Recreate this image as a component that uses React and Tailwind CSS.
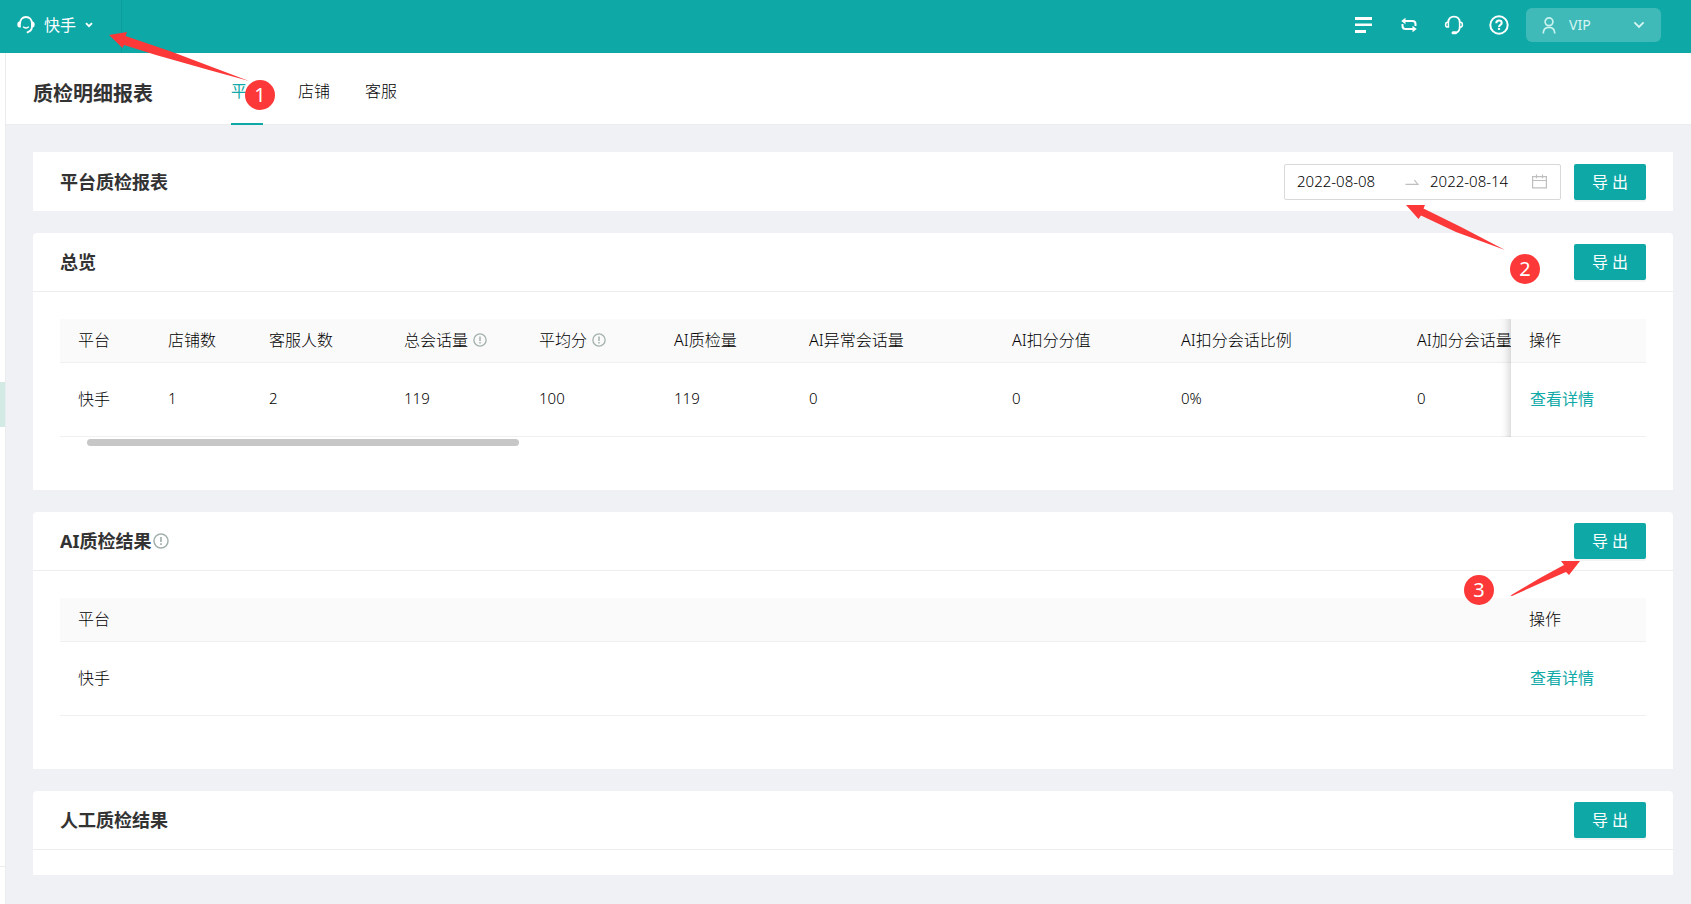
import React from "react";

const columns = [
  { label: "平台", width: "w-[90px]", value: "快手" },
  { label: "店铺数", width: "w-[101px]", value: "1" },
  { label: "客服人数", width: "w-[135px]", value: "2" },
  { label: "总会话量", width: "w-[135px]", value: "119", info: true },
  { label: "平均分", width: "w-[135px]", value: "100", info: true },
  { label: "AI质检量", width: "w-[135px]", value: "119" },
  { label: "AI异常会话量", width: "w-[203px]", value: "0" },
  { label: "AI扣分分值", width: "w-[169px]", value: "0" },
  { label: "AI扣分会话比例", width: "w-[236px]", value: "0%" },
  { label: "AI加分会话量", width: "w-[236px]", value: "0" },
];

function InfoIcon({ className }) {
  return (
    <svg viewBox="0 0 16 16" className={className} fill="none" stroke="#a3b1ad" strokeWidth="1.5">
      <circle cx="8" cy="8" r="7" />
      <path d="M8 4v5" strokeWidth="1.7" />
      <path d="M8 10.2v1.8" strokeWidth="1.7" />
    </svg>
  );
}

function ExportButton() {
  return (
    <button
      type="button"
      className="h-9 w-[72px] shrink-0 rounded-[2px] bg-[#0ea9a7] text-base leading-none text-white shadow-[0_2px_0_rgba(0,0,0,0.045)]"
    >
      导 出
    </button>
  );
}

function CardHeader({ title, info }) {
  return (
    <div className="flex h-[59px] items-center justify-between border-b border-[#ededed] px-[27px]">
      <h2 className="flex items-center gap-[2px] text-lg font-bold text-[#333]">
        {title}
        {info && <InfoIcon className="size-4" />}
      </h2>
      <ExportButton />
    </div>
  );
}

const headCell =
  "h-11 border-b border-[#f0f0f0] bg-[#fafafa] px-[18px] pb-[2px] text-left font-light whitespace-nowrap text-black";
const bodyCell = "h-[74px] border-b border-[#f0f0f0] bg-white px-[18px] pb-[2px] font-light text-black";
const pinned =
  "sticky right-0 before:pointer-events-none before:absolute before:top-0 before:-bottom-px before:right-full before:w-[30px] before:shadow-[inset_-10px_0_8px_-8px_rgba(0,0,0,0.18)]";

function DetailLink() {
  return (
    <a href="#detail" className="pl-px font-normal text-[#12aaa8]">
      查看详情
    </a>
  );
}

function Marker({ n, className }) {
  return (
    <span
      className={
        "absolute flex size-[30px] items-center justify-center rounded-full bg-[#fc3838] text-xl leading-none text-white " +
        className
      }
    >
      {n}
    </span>
  );
}

export default function App() {
  return (
    <div className="relative flex min-h-screen flex-col overflow-hidden bg-[#f0f1f5] font-['Noto_Sans','Noto_Sans_CJK_SC',sans-serif] text-base text-[#333]">
      <header className="flex h-[53px] items-center justify-between bg-[#0ea9a7] pr-[30px] text-white">
        <button
          type="button"
          className="flex h-full w-[122px] items-center border-r border-[#0c9c9b] pb-1 pl-[17px] text-base"
        >
          <svg viewBox="0 0 18 18" className="mr-[9px] size-[18px]" fill="none" stroke="white" strokeWidth="1.8">
            <path d="M3 8C3 3.800 5.400 1 9 1s6 2.800 6 7v2.600c0 3-1.800 5.100-5.200 6" />
            <path d="M3.800 5.600H2.600C1.200 5.600.3 6.800.3 8.600s.9 3 2.300 3h1.200zM14.200 5.600h1.200c1.400 0 2.300 1.200 2.300 3s-.9 3-2.300 3h-1.200z" fill="white" stroke="none" />
            <path d="M6.200 10.600c.7 1 1.700 1.400 2.800 1.400s2.100-.4 2.800-1.400" strokeWidth="1.500" />
          </svg>
          快手
          <svg viewBox="0 0 8 6" className="ml-[9px] h-[6px] w-[8px]" fill="none" stroke="white" strokeWidth="1.900">
            <path d="M1 1.200 4 4.200 7 1.200" />
          </svg>
        </button>
        <div className="flex items-center pb-[3px]">
          <button type="button" aria-label="菜单" className="mr-[28px]">
            <svg viewBox="0 0 18 18" className="block size-[18px]" fill="white">
              <path d="M0 1h17v3H0zM0 7.500h17v2.500H0zM0 14h11v3H0z" />
            </svg>
          </button>
          <button type="button" aria-label="切换" className="mr-[27px]">
            <svg viewBox="0 0 16 16" className="block size-4" fill="none" stroke="white" strokeWidth="2">
              <path d="M3 4h8.500c2 0 3 1 3 3v2" />
              <path d="M13 12H4.500c-2 0-3-1-3-3V7" />
              <path d="M4.500.8v6.400L.3 4zM11.500 8.800v6.400l4.200-3.200z" fill="white" stroke="none" />
            </svg>
          </button>
          <button type="button" aria-label="客服" className="mr-[25px]">
            <svg viewBox="0 0 20 20" className="block size-5" fill="none" stroke="white" strokeWidth="1.800">
              <path d="M4.200 7.500C4.400 3.800 6.600 1.600 10 1.600s5.600 2.200 5.800 5.900" />
              <path d="M4.400 7.300H3.600c-1.300 0-2 .9-2 2.400s.7 2.400 2 2.400h.8zM15.600 7.300h.8c1.300 0 2 .9 2 2.400s-.7 2.400-2 2.400h-.8z" strokeWidth="1.500" />
              <path d="M15.800 12c-.1 2.800-1.300 4.800-3.400 5.600" />
              <path d="M9 17.800h2.600" strokeWidth="3" strokeLinecap="round" />
            </svg>
          </button>
          <button type="button" aria-label="帮助" className="mr-[17px]">
            <svg viewBox="0 0 20 20" className="block size-5" fill="none" stroke="white" strokeWidth="2">
              <circle cx="10" cy="10" r="8.700" />
              <path d="M7.300 8.200c0-1.700 1.100-2.700 2.700-2.700s2.700 1 2.700 2.400c0 1.900-2.700 2-2.700 4" strokeWidth="2" />
              <path d="M10 12.900v2" strokeWidth="2.200" />
            </svg>
          </button>
          <button
            type="button"
            className="flex h-[34px] w-[135px] items-center rounded-md bg-[#3fbab9] px-[16px] text-sm text-[#d8f6f4]"
          >
            <svg viewBox="0 0 14 17" className="h-[17px] w-[14px]" fill="none" stroke="#c8f3ef" strokeWidth="1.700">
              <circle cx="7" cy="4.800" r="3.900" />
              <path d="M1.200 16.500c.1-4 2.300-6.200 5.800-6.200s5.700 2.200 5.800 6.200" />
            </svg>
            <span className="ml-[13px] flex-1 text-left">VIP</span>
            <svg viewBox="0 0 12 8" className="h-2 w-3" fill="none" stroke="#d8f6f4" strokeWidth="1.800">
              <path d="m1.400 1.400 4.600 4.600 4.600-4.600" />
            </svg>
          </button>
        </div>
      </header>

      <div className="flex flex-1">
        <aside className="w-[6px] shrink-0 border-r border-[#ebecee] bg-white">
          <div className="mt-[329px] h-[45px] bg-[#d2eae3]" />
          <div className="mt-[439px] h-px bg-[#ececec]" />
        </aside>

        <div className="min-w-0 flex-1">
          <div className="flex h-[72px] items-center border-b border-[#ececee] bg-white pl-[27px]">
            <h1 className="pt-[11px] text-xl font-bold text-[#333]">质检明细报表</h1>
            <nav className="ml-[78px] flex h-[72px] gap-[35px] font-light text-black">
              <a href="#platform" className="flex items-center border-b-2 border-[#0ea9a7] pt-[6px] font-normal text-[#12aaa8]">
                平台
              </a>
              <a href="#shop" className="flex items-center border-b-2 border-transparent pt-[6px]">
                店铺
              </a>
              <a href="#service" className="flex items-center border-b-2 border-transparent pt-[6px]">
                客服
              </a>
            </nav>
          </div>

          <main className="flex flex-col gap-[22px] pt-[27px] pr-[18px] pb-[29px] pl-[27px]">
            <section className="flex h-[59px] items-center justify-between bg-white px-[27px]">
              <h2 className="text-lg font-bold text-[#333]">平台质检报表</h2>
              <div className="flex items-center gap-[13px]">
                <div className="flex h-9 w-[277px] items-center rounded-[2px] border border-[#d9d9d9] bg-white pr-[13px] pl-3 text-[15px] font-light text-black">
                  <input aria-label="开始日期" readOnly defaultValue="2022-08-08" className="w-[108px] min-w-0 bg-transparent outline-none" />
                  <svg viewBox="0 0 14 14" className="mr-[11px] size-[14px] shrink-0" fill="none" stroke="#bfbfbf" strokeWidth="1.200">
                    <path d="M.5 9.400h12.500L9.400 5.200" />
                  </svg>
                  <input aria-label="结束日期" readOnly defaultValue="2022-08-14" className="w-[102px] min-w-0 bg-transparent outline-none" />
                  <svg viewBox="0 0 15 15" className="size-[15px] shrink-0" fill="none" stroke="#bfbfbf" strokeWidth="1.200">
                    <path d="M.6 2.600h13.800v11.200H.6zM.6 6.500h13.800M4.500.6v3.600M10.500.6v3.600" />
                  </svg>
                </div>
                <ExportButton />
              </div>
            </section>

            <section className="rounded-t-[4px] bg-white">
              <CardHeader title="总览" />
              <div className="h-[198px] px-[27px] pt-[27px]">
                <div className="overflow-x-hidden">
                  <table className="w-[1710px] table-fixed border-separate border-spacing-0">
                    <thead>
                      <tr>
                        {columns.map((c) => (
                          <th key={c.label} className={headCell + " " + c.width}>
                            <span className="flex items-center gap-[5px]">
                              {c.label}
                              {c.info && <InfoIcon className="size-[14px]" />}
                            </span>
                          </th>
                        ))}
                        <th className={headCell + " w-[135px] " + pinned}>操作</th>
                      </tr>
                    </thead>
                    <tbody>
                      <tr>
                        {columns.map((c, i) => (
                          <td key={c.label} className={bodyCell + (i ? " text-[15px]" : "")}>
                            {c.value}
                          </td>
                        ))}
                        <td className={bodyCell + " " + pinned}>
                          <DetailLink />
                        </td>
                      </tr>
                    </tbody>
                  </table>
                </div>
                <div className="mt-[2px] ml-[27px] h-[7px] w-[432px] rounded-full bg-[#c7c7c7]" />
              </div>
            </section>

            <section className="rounded-t-[4px] bg-white">
              <CardHeader title="AI质检结果" info />
              <div className="h-[198px] px-[27px] pt-[27px]">
                <table className="w-full table-fixed border-separate border-spacing-0">
                  <thead>
                    <tr>
                      <th className={headCell}>平台</th>
                      <th className={headCell + " w-[135px]"}>操作</th>
                    </tr>
                  </thead>
                  <tbody>
                    <tr>
                      <td className={bodyCell}>快手</td>
                      <td className={bodyCell}>
                        <DetailLink />
                      </td>
                    </tr>
                  </tbody>
                </table>
              </div>
            </section>

            <section className="rounded-t-[4px] bg-white pb-[25px]">
              <CardHeader title="人工质检结果" />
            </section>
          </main>
        </div>
      </div>

      <svg viewBox="0 0 140 50" className="pointer-events-none absolute top-8 left-[109px] h-[50px] w-[140px]" fill="#fc3838">
        <path d="M0 3 18 0 16.500 4 62 19.500 140 49 100 38 47 23 15 13 13.500 16z" />
      </svg>
      <Marker n="1" className="top-20 left-[245px]" />
      <svg viewBox="0 0 100 46" className="pointer-events-none absolute top-[205px] right-[185px] h-[46px] w-[100px]" fill="#fc3838">
        <path d="M0 0H19L17.500 3.500 55 22 99 45 50 27 15 10.500 12.500 14z" />
      </svg>
      <Marker n="2" className="top-[254px] right-[151px]" />
      <svg viewBox="0 0 70 36" className="pointer-events-none absolute top-[561px] right-[111px] h-9 w-[70px]" fill="#fc3838">
        <path d="M70 0H51L54 4 30 17 .5 34.500 2 35 33 21 56 11 59 14z" />
      </svg>
      <Marker n="3" className="top-[575px] right-[197px]" />
    </div>
  );
}
